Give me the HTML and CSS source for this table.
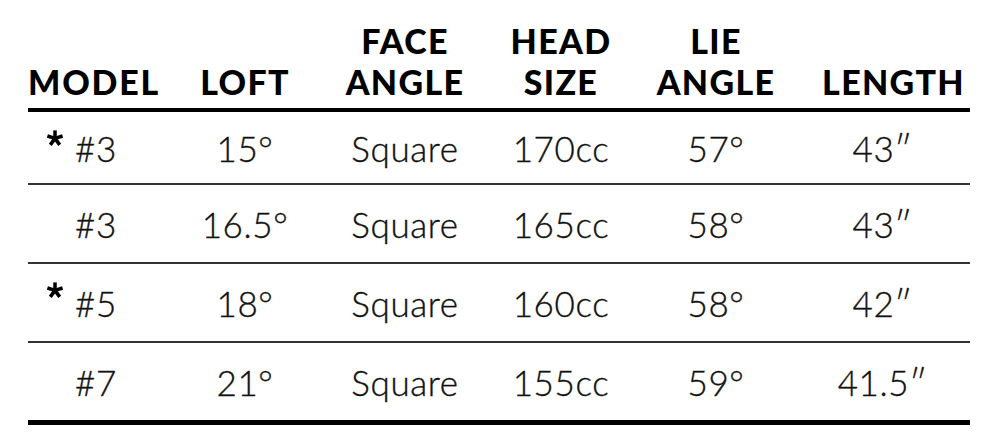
FILE: index.html
```html
<!DOCTYPE html>
<html>
<head>
<meta charset="utf-8">
<link rel="stylesheet" href="styles.css">
</head>
<body>
<table class="specs">
  <colgroup>
    <col class="c-model"><col class="c-loft"><col class="c-face"><col class="c-head"><col class="c-lie"><col class="c-len">
  </colgroup>
  <thead>
    <tr>
      <th class="model">MODEL</th>
      <th>LOFT</th>
      <th>FACE<br>ANGLE</th>
      <th>HEAD<br>SIZE</th>
      <th>LIE<br>ANGLE</th>
      <th class="len">LENGTH</th>
    </tr>
  </thead>
  <tbody>
    <tr>
      <td class="model"><span class="star"><svg viewBox="0 0 20 20" width="16" height="16"><g stroke="#000" stroke-width="4.4" stroke-linecap="butt"><line x1="10" y1="10.5" x2="10" y2="0.5"/><line x1="10" y1="10.5" x2="19.5" y2="7.4"/><line x1="10" y1="10.5" x2="15.9" y2="18.6"/><line x1="10" y1="10.5" x2="4.1" y2="18.6"/><line x1="10" y1="10.5" x2="0.5" y2="7.4"/></g></svg></span>#3</td>
      <td>15°</td><td>Square</td><td>170cc</td><td>57°</td><td class="len">43″</td>
    </tr>
    <tr>
      <td class="model">#3</td>
      <td>16.5°</td><td>Square</td><td>165cc</td><td>58°</td><td class="len">43″</td>
    </tr>
    <tr>
      <td class="model"><span class="star"><svg viewBox="0 0 20 20" width="16" height="16"><g stroke="#000" stroke-width="4.4" stroke-linecap="butt"><line x1="10" y1="10.5" x2="10" y2="0.5"/><line x1="10" y1="10.5" x2="19.5" y2="7.4"/><line x1="10" y1="10.5" x2="15.9" y2="18.6"/><line x1="10" y1="10.5" x2="4.1" y2="18.6"/><line x1="10" y1="10.5" x2="0.5" y2="7.4"/></g></svg></span>#5</td>
      <td>18°</td><td>Square</td><td>160cc</td><td>58°</td><td class="len">42″</td>
    </tr>
    <tr>
      <td class="model">#7</td>
      <td>21°</td><td>Square</td><td>155cc</td><td>59°</td><td class="len">41.5″</td>
    </tr>
  </tbody>
</table>
</body>
</html>
```
FILE: styles.css
```css
html, body {
  margin: 0;
  padding: 0;
  background: #fff;
}
body {
  padding: 20px 0 0 28px;
}
.specs {
  border-collapse: collapse;
  width: 942px;
  font-family: "Lato", "Liberation Sans", sans-serif;
  color: #111;
}
.c-model { width: 137px; }
.c-loft { width: 160px; }
.c-face { width: 160px; }
.c-head { width: 152px; }
.c-lie { width: 158px; }
.c-len { width: 175px; }
.specs th {
  font-weight: 900;
  font-size: 34px;
  line-height: 41px;
  letter-spacing: 1.3px;
  text-align: center;
  vertical-align: bottom;
  padding: 0 0 6px 0;
  color: #000;
  border-bottom: 4px solid #000;
}
.specs th.model {
  text-align: left;
  letter-spacing: 1.8px;
}
.specs th.len {
  padding-left: 22px;
}
.specs td {
  font-weight: 300;
  font-size: 35px;
  letter-spacing: 0.6px;
  -webkit-text-stroke: 0.35px #111;
  height: 77px;
  padding: 0;
  text-align: center;
  vertical-align: middle;
  border-bottom: 2px solid #333;
}
.specs tbody tr:first-child td {
  height: 71px;
}
.specs tbody tr:last-child td {
  border-bottom: 5px solid #000;
}
.specs td.model {
  text-align: left;
  padding-left: 47px;
  position: relative;
}
.star {
  position: absolute;
  left: 19px;
  top: 18px;
  line-height: 0;
}
```
